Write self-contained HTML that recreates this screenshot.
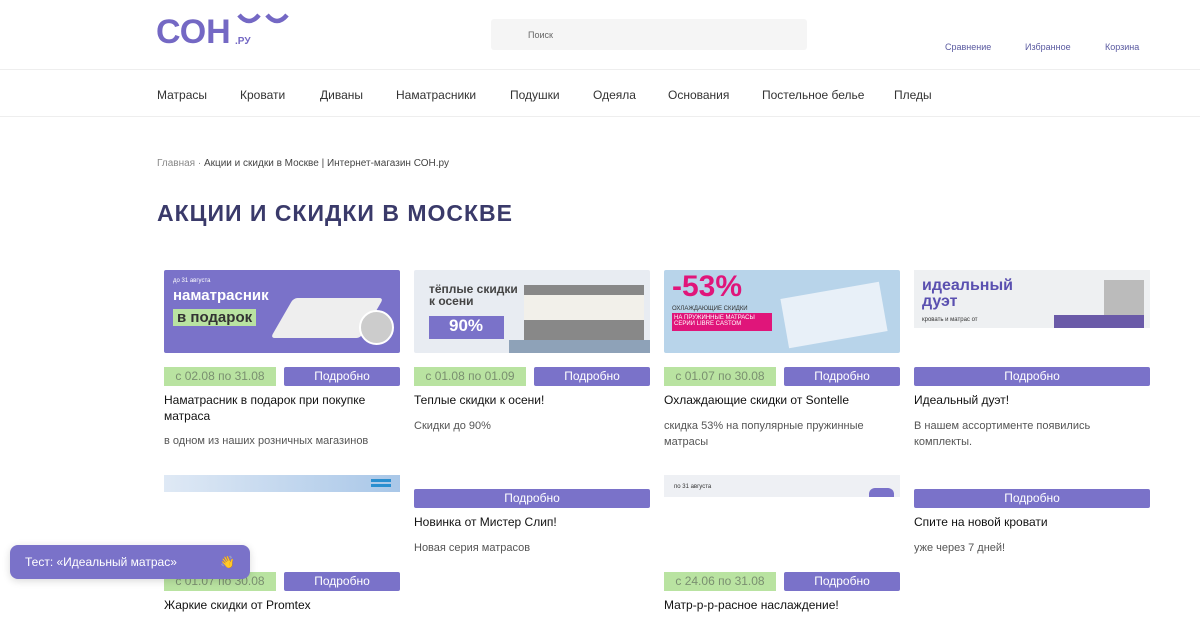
<!DOCTYPE html>
<html><head><meta charset="utf-8"><style>
*{margin:0;padding:0;box-sizing:border-box}
body{width:1200px;height:627px;overflow:hidden;background:#fff;font-family:"Liberation Sans",sans-serif;position:relative;color:#222}
.a{position:absolute}
.nav{font-size:12px;color:#333;top:88px}
.hl{font-size:9px;color:#5a5aa0;top:42px}
.date{background:#b9e3a1;color:#7a8f70;font-size:12px;text-align:center;line-height:19px;height:19px;width:112px}
.btn{background:#7a72c9;color:#fff;font-size:12px;text-align:center;line-height:19px;height:19px;border-radius:2px}
.t{font-size:12px;color:#111;line-height:16px;width:236px}
.d{font-size:11px;color:#555;line-height:16px;width:236px}
</style></head><body>
<div class="a" style="left:156px;top:13px;font:bold 34px 'Liberation Sans',sans-serif;color:#7468c4;letter-spacing:0px">СОН</div>
<div class="a" style="left:235px;top:36px;font:bold 10px 'Liberation Sans';color:#7468c4">.РУ</div>
<svg class="a" style="left:235px;top:12px" width="55" height="16"><path d="M4 3 Q14 15 24 3 M32 3 Q42 15 52 3" stroke="#7468c4" stroke-width="4.5" fill="none"/></svg>
<div class="a" style="left:491px;top:19px;width:316px;height:31px;background:#f5f5f5;border-radius:3px;font-size:9px;color:#666;padding:11px 37px">Поиск</div>
<div class="a hl" style="left:945px">Сравнение</div>
<div class="a hl" style="left:1025px">Избранное</div>
<div class="a hl" style="left:1105px">Корзина</div>
<div class="a" style="left:0;top:69px;width:1200px;height:1px;background:#eee"></div>
<div class="a" style="left:0;top:116px;width:1200px;height:1px;background:#eee"></div>
<div class="a nav" style="left:157px">Матрасы</div>
<div class="a nav" style="left:240px">Кровати</div>
<div class="a nav" style="left:320px">Диваны</div>
<div class="a nav" style="left:396px">Наматрасники</div>
<div class="a nav" style="left:510px">Подушки</div>
<div class="a nav" style="left:593px">Одеяла</div>
<div class="a nav" style="left:668px">Основания</div>
<div class="a nav" style="left:762px">Постельное белье</div>
<div class="a nav" style="left:894px">Пледы</div>
<div class="a" style="left:157px;top:158px;font-size:10px;color:#888">Главная · <span style="color:#444">Акции и скидки в Москве | Интернет-магазин СОН.ру</span></div>
<div class="a" style="left:157px;top:200px;font-size:23px;font-weight:bold;color:#3a3a6a;letter-spacing:1px">АКЦИИ И СКИДКИ В МОСКВЕ</div>

<div class="a" style="left:164px;top:270px;width:236px;height:83px;background:#7a72c9;border-radius:2px;color:#fff">
<div class="a" style="left:9px;top:8px;font-size:6px">до 31 августа</div>
<div class="a" style="left:9px;top:17px;font-size:15px;font-weight:bold">наматрасник</div>
<div class="a" style="left:9px;top:39px;font-size:15px;font-weight:bold;background:#b9e3a1;color:#333;padding:0 4px">в подарок</div>
<div class="a" style="left:118px;top:28px;width:90px;height:40px;background:#eee;transform:skewX(-30deg);border-radius:4px"></div>
<div class="a" style="left:195px;top:40px;width:35px;height:35px;background:#ccc;border-radius:50%;border:2px solid #fff"></div>
</div>
<div class="a" style="left:414px;top:270px;width:236px;height:83px;background:#e8ecf2;border-radius:2px">
<div class="a" style="left:15px;top:13px;font-size:12px;font-weight:bold;color:#444;line-height:12px">тёплые скидки<br>к осени</div>
<div class="a" style="left:15px;top:46px;width:75px;height:23px;background:#7a72c9;color:#fff;font-size:17px;font-weight:bold;padding-left:20px">90%</div>
<div class="a" style="left:110px;top:15px;width:120px;height:55px;background:#888;"></div>
<div class="a" style="left:110px;top:25px;width:120px;height:25px;background:#f2f0ea"></div>
<div class="a" style="left:95px;top:70px;width:141px;height:13px;background:#8ea2b8"></div>
</div>
<div class="a" style="left:664px;top:270px;width:236px;height:83px;background:#b8d4ea;border-radius:2px">
<div class="a" style="left:8px;top:0;font-size:30px;font-weight:bold;color:#e0157a">-53%</div>
<div class="a" style="left:8px;top:36px;font-size:6px;color:#333">ОХЛАЖДАЮЩИЕ СКИДКИ</div>
<div class="a" style="left:8px;top:43px;width:100px;height:18px;background:#e0157a;color:#fff;font-size:6px;padding:2px">НА ПРУЖИННЫЕ МАТРАСЫ СЕРИИ LIBRE CASTOM</div>
<div class="a" style="left:120px;top:20px;width:100px;height:50px;background:#e8f0f8;transform:rotate(-10deg)"></div>
</div>
<div class="a" style="left:914px;top:270px;width:236px;height:58px;background:#eef0f2">
<div class="a" style="left:8px;top:8px;font-size:16px;font-weight:bold;color:#5a50b0;line-height:16px">идеальный<br>дуэт</div>
<div class="a" style="left:8px;top:47px;font-size:6px;color:#333">кровать и матрас от</div>
<div class="a" style="left:190px;top:10px;width:40px;height:40px;background:#bbb"></div>
<div class="a" style="left:140px;top:45px;width:90px;height:13px;background:#6a5aa8"></div>
</div>

<div class="a date" style="left:164px;top:367px">с 02.08 по 31.08</div>
<div class="a btn" style="left:284px;top:367px;width:116px">Подробно</div>
<div class="a date" style="left:414px;top:367px">с 01.08 по 01.09</div>
<div class="a btn" style="left:534px;top:367px;width:116px">Подробно</div>
<div class="a date" style="left:664px;top:367px">с 01.07 по 30.08</div>
<div class="a btn" style="left:784px;top:367px;width:116px">Подробно</div>
<div class="a btn" style="left:914px;top:367px;width:236px">Подробно</div>

<div class="a t" style="left:164px;top:392px">Наматрасник в подарок при покупке матраса</div>
<div class="a d" style="left:164px;top:433px">в одном из наших розничных магазинов</div>
<div class="a t" style="left:414px;top:392px">Теплые скидки к осени!</div>
<div class="a d" style="left:414px;top:418px">Скидки до 90%</div>
<div class="a t" style="left:664px;top:392px">Охлаждающие скидки от Sontelle</div>
<div class="a d" style="left:664px;top:418px">скидка 53% на популярные пружинные матрасы</div>
<div class="a t" style="left:914px;top:392px">Идеальный дуэт!</div>
<div class="a d" style="left:914px;top:418px">В нашем ассортименте появились комплекты.</div>

<div class="a" style="left:164px;top:475px;width:236px;height:17px;background:linear-gradient(90deg,#dfe9f5,#a9c7e8)"><div class="a" style="left:207px;top:4px;width:20px;height:8px;border-top:3px solid #2a8fd0;border-bottom:3px solid #2a8fd0"></div></div>
<div class="a" style="left:664px;top:475px;width:236px;height:22px;background:#eef0f4"><div class="a" style="left:10px;top:9px;font-size:6px;color:#333">по 31 августа</div><div class="a" style="left:205px;top:13px;width:25px;height:9px;background:#7a72c9;border-radius:6px 6px 0 0"></div></div>

<div class="a btn" style="left:414px;top:489px;width:236px">Подробно</div>
<div class="a t" style="left:414px;top:514px">Новинка от Мистер Слип!</div>
<div class="a d" style="left:414px;top:540px">Новая серия матрасов</div>
<div class="a btn" style="left:914px;top:489px;width:236px">Подробно</div>
<div class="a t" style="left:914px;top:514px">Спите на новой кровати</div>
<div class="a d" style="left:914px;top:540px">уже через 7 дней!</div>

<div class="a date" style="left:164px;top:572px">с 01.07 по 30.08</div>
<div class="a btn" style="left:284px;top:572px;width:116px">Подробно</div>
<div class="a date" style="left:664px;top:572px">с 24.06 по 31.08</div>
<div class="a btn" style="left:784px;top:572px;width:116px">Подробно</div>
<div class="a t" style="left:164px;top:597px">Жаркие скидки от Promtex</div>
<div class="a t" style="left:664px;top:597px">Матр-р-р-расное наслаждение!</div>

<div class="a" style="left:10px;top:545px;width:240px;height:34px;background:#7a72c9;border-radius:8px;color:#fff;font-size:12px;line-height:34px;padding-left:15px;box-shadow:0 2px 8px rgba(0,0,0,.15)">Тест: «Идеальный матрас»<span style="position:absolute;left:210px">👋</span></div>
</body></html>
